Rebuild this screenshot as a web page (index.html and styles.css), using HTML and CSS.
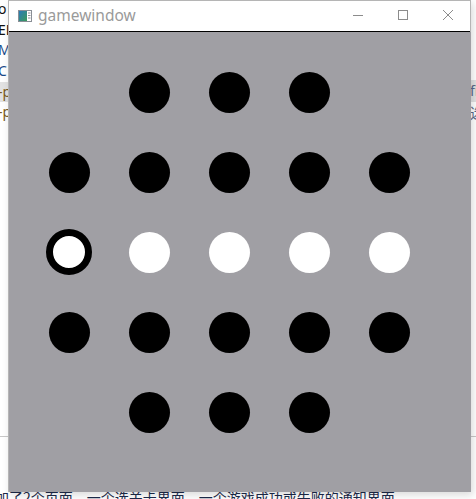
FILE: index.html
```html
<!DOCTYPE html>
<html>
<head>
<meta charset="utf-8">
<link rel="stylesheet" href="styles.css">
</head>
<body>
<div class="desk">
  <div class="leftcol">
    <div class="ln k">o</div>
    <div class="ln k">EL</div>
    <div class="ln b">M</div>
    <div class="ln b">C</div>
    <div class="ln o hl">-p</div>
    <div class="ln o">-p</div>
  </div>
  <div class="rightcol">
    <div class="rl hl">fi</div>
    <div class="rl">选</div>
  </div>
  <div class="divider"></div>
  <div class="bottomtext">加了2个页面，一个选关卡界面，一个游戏成功或失败的通知界面。</div>

  <div class="window">
    <div class="titlebar">
      <svg class="appicon" width="14" height="12" viewBox="0 0 14 12">
        <rect x="0.5" y="0.5" width="13" height="11" fill="#fff" stroke="#8a8f96"/>
        <defs><linearGradient id="g" x1="0" y1="0" x2="1" y2="1"><stop offset="0" stop-color="#2a7ab8"/><stop offset="1" stop-color="#3b9a5a"/></linearGradient></defs>
        <rect x="1" y="1" width="8" height="10" fill="url(#g)"/>
        <rect x="10" y="2.5" width="2.5" height="1" fill="#8a8f96"/>
        <rect x="10" y="5" width="2.5" height="1" fill="#8a8f96"/>
        <rect x="10" y="7.5" width="2.5" height="1" fill="#8a8f96"/>
      </svg>
      <span class="title">gamewindow</span>
      <div class="controls">
        <div class="ctl"><svg width="10" height="10" viewBox="0 0 10 10"><line x1="0" y1="5.5" x2="10" y2="5.5" stroke="#8c8c8c"/></svg></div>
        <div class="ctl"><svg width="10" height="10" viewBox="0 0 10 10"><rect x="0.5" y="0.5" width="9" height="9" fill="none" stroke="#8c8c8c"/></svg></div>
        <div class="ctl"><svg width="10" height="10" viewBox="0 0 10 10"><path d="M0 0 L10 10 M10 0 L0 10" stroke="#8c8c8c" stroke-width="1"/></svg></div>
      </div>
    </div>
    <div class="client">
      <div class="board">
        <div class="cell"></div><div class="cell"><span class="peg"></span></div><div class="cell"><span class="peg"></span></div><div class="cell"><span class="peg"></span></div><div class="cell"></div>
        <div class="cell"><span class="peg"></span></div><div class="cell"><span class="peg"></span></div><div class="cell"><span class="peg"></span></div><div class="cell"><span class="peg"></span></div><div class="cell"><span class="peg"></span></div>
        <div class="cell"><span class="peg sel"></span></div><div class="cell"><span class="peg white"></span></div><div class="cell"><span class="peg white"></span></div><div class="cell"><span class="peg white"></span></div><div class="cell"><span class="peg white"></span></div>
        <div class="cell"><span class="peg"></span></div><div class="cell"><span class="peg"></span></div><div class="cell"><span class="peg"></span></div><div class="cell"><span class="peg"></span></div><div class="cell"><span class="peg"></span></div>
        <div class="cell"></div><div class="cell"><span class="peg"></span></div><div class="cell"><span class="peg"></span></div><div class="cell"><span class="peg"></span></div><div class="cell"></div>
      </div>
    </div>
  </div>
</div>
</body>
</html>
```
FILE: styles.css
```css
html, body {
  margin: 0;
  padding: 0;
  background: #ffffff;
  overflow: hidden;
}
.desk {
  position: relative;
  width: 476px;
  height: 499px;
  overflow: hidden;
  font-family: "Noto Sans", "Liberation Sans", "Noto Sans CJK SC", sans-serif;
}
.leftcol {
  position: absolute;
  left: -2px;
  top: -1px;
  width: 20px;
  display: flex;
  flex-direction: column;
}
.ln {
  height: 20.7px;
  line-height: 20.7px;
  font-size: 14px;
  white-space: nowrap;
}
.ln.k { color: #111; }
.ln.b { color: #1a4a8a; }
.ln.o { color: #7a5a20; }
.hl { background: #e2e2e2; }
.rightcol {
  position: absolute;
  left: 469px;
  top: 80px;
  width: 10px;
  display: flex;
  flex-direction: column;
}
.rl {
  height: 22px;
  line-height: 22px;
  font-size: 14px;
  color: #5a6a8a;
  white-space: nowrap;
  padding-left: 1px;
}
.divider {
  position: absolute;
  left: 0;
  right: 0;
  top: 436px;
  height: 1px;
  background: #c8c8c8;
}
.bottomtext {
  position: absolute;
  left: -5px;
  top: 487px;
  font-size: 14px;
  line-height: 20px;
  color: #1c2a4a;
  white-space: nowrap;
  font-family: "Noto Sans CJK SC", sans-serif;
}
.window {
  position: absolute;
  left: 8px;
  top: 0;
  width: 461px;
  display: flex;
  flex-direction: column;
  background: #fff;
  border: 1px solid #b5b5b5;
  border-bottom: none;
  box-shadow: 2px 3px 8px rgba(0,0,0,0.15);
}
.titlebar {
  height: 30px;
  display: flex;
  align-items: center;
  background: #fff;
  border-bottom: 1px solid #000;
}
.appicon {
  margin-left: 9px;
}
.title {
  margin-left: 6px;
  font-size: 15.5px;
  color: #9a9a9a;
  font-family: "Noto Sans", sans-serif;
  margin-top: -2px;
}
.controls {
  margin-left: auto;
  display: flex;
  height: 30px;
}
.ctl {
  width: 45px;
  display: flex;
  align-items: center;
  justify-content: center;
  margin-top: -2px;
}
.client {
  background: #a09fa4;
  height: 460px;
  padding: 20px 0 0 20px;
  box-sizing: border-box;
  margin-right: -1px;
}
.board {
  display: grid;
  grid-template-columns: repeat(5, 80px);
  grid-template-rows: repeat(5, 80px);
}
.cell {
  display: flex;
  align-items: center;
  justify-content: center;
}
.peg {
  width: 41px;
  height: 41px;
  border-radius: 50%;
  background: #000;
  display: block;
}
.peg.white {
  background: #fff;
}
.peg.sel {
  width: 32px;
  height: 32px;
  background: #fff;
  border: 7px solid #000;
}
```
